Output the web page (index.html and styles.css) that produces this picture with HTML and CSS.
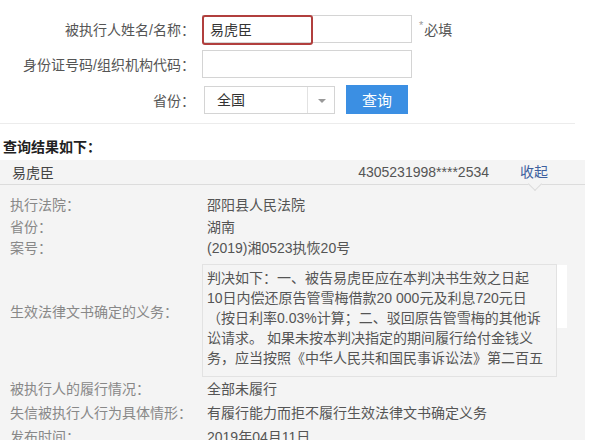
FILE: index.html
```html
<!DOCTYPE html>
<html lang="zh-CN">

<head>
    <meta charset="UTF-8" />
    <meta name="viewport" content="width=device-width, initial-scale=1.0" />
    <title>失信被执行人查询</title>
    <link rel="stylesheet" href="styles.css">
</head>

<body>
    <!-- Search form -->
    <form class="search">
        <div class="field">
            <label class="field-label">被执行人姓名/名称：</label>
            <div class="input-wrap">
                <input class="text-input" type="text" value="易虎臣">
                <span class="mark"></span>
            </div>
            <span class="required"><i>*</i>必填</span>
        </div>
        <div class="field">
            <label class="field-label">身份证号码/组织机构代码：</label>
            <div class="input-wrap">
                <input class="text-input" type="text" value="">
            </div>
        </div>
        <div class="field">
            <label class="field-label">省份：</label>
            <div class="field-group">
                <div class="select">
                    <span class="select-value">全国</span>
                    <span class="select-arrow"></span>
                </div>
                <button class="btn" type="button">查询</button>
            </div>
        </div>
    </form>

    <hr class="divider">

    <h3 class="result-title">查询结果如下：</h3>

    <!-- Result panel -->
    <section class="result">
        <div class="result-head">
            <span class="result-name">易虎臣</span>
            <span class="result-id">4305231998****2534</span>
            <a class="toggle">收起</a>
        </div>

        <div class="detail">
            <div class="row">
                <span class="row-label">执行法院：</span>
                <span class="row-value">邵阳县人民法院</span>
            </div>
            <div class="row">
                <span class="row-label">省份：</span>
                <span class="row-value">湖南</span>
            </div>
            <div class="row">
                <span class="row-label">案号：</span>
                <span class="row-value">(2019)湘0523执恢20号</span>
            </div>
            <div class="row row-duty">
                <span class="row-label">生效法律文书确定的义务：</span>
                <div class="duty">
                    <div class="duty-text">
                        判决如下：一、被告易虎臣应在本判决书生效之日起<br>
                        10日内偿还原告管雪梅借款20 000元及利息720元日<br>
                        （按日利率0.03%计算；二、驳回原告管雪梅的其他诉<br>
                        讼请求。 如果未按本判决指定的期间履行给付金钱义<br>
                        务，应当按照《中华人民共和国民事诉讼法》第二百五
                    </div>
                    <div class="duty-scroll"></div>
                </div>
            </div>
            <div class="row row-tall">
                <span class="row-label">被执行人的履行情况：</span>
                <span class="row-value">全部未履行</span>
            </div>
            <div class="row row-tall">
                <span class="row-label">失信被执行人行为具体情形：</span>
                <span class="row-value">有履行能力而拒不履行生效法律文书确定义务</span>
            </div>
            <div class="row row-tall">
                <span class="row-label">发布时间：</span>
                <span class="row-value">2019年04月11日</span>
            </div>
        </div>
    </section>
</body>

</html>
```

FILE: styles.css
```css
* {
    margin: 0;
    padding: 0;
    box-sizing: border-box;
}

body {
    font-family: "Liberation Sans", "Noto Sans CJK SC", sans-serif;
    font-size: 14px;
    color: #555;
    background-color: #fff;
    overflow: hidden;
}

/* Search form */
.search {
    display: flex;
    flex-direction: column;
    gap: 7px;
    padding-top: 15px;
}

.field {
    display: grid;
    grid-template-columns: 195px auto auto;
    column-gap: 7px;
    align-items: center;
    justify-content: start;
    height: 28px;
}

.field-label {
    text-align: right;
    color: #555;
}

.input-wrap {
    position: relative;
}

.text-input {
    display: block;
    width: 210px;
    height: 28px;
    border: 1px solid #d4d4d4;
    padding: 0 7px;
    font: inherit;
    color: #333;
    background: #fff;
    outline: none;
}

/* red highlight around the name */
.mark {
    position: absolute;
    left: 0;
    top: 0;
    width: 111px;
    height: 30px;
    border: 2px solid #b13f3d;
    border-radius: 3px;
}

.required {
    color: #555;
}

.required i {
    font-style: normal;
    font-size: 11px;
    color: #999;
    vertical-align: top;
    margin-right: 1px;
}

.field-group {
    display: flex;
    align-items: center;
    padding-left: 2px;
}

.select {
    display: flex;
    width: 131px;
    height: 28px;
    border: 1px solid #d4d4d4;
    background: #fff;
}

.select-value {
    flex: 1;
    line-height: 26px;
    padding-left: 12px;
    color: #333;
}

.select-arrow {
    position: relative;
    width: 27px;
    border-left: 1px solid #e2e2e2;
}

.select-arrow::after {
    content: "";
    position: absolute;
    left: 10px;
    top: 12px;
    border: 4px solid transparent;
    border-top-color: #999;
}

.btn {
    margin-left: 11px;
    width: 62px;
    height: 29px;
    border: none;
    background-color: #3b8fe3;
    color: #fff;
    font: inherit;
    font-size: 15px;
}

.divider {
    width: 575px;
    border: 0;
    border-top: 1px solid #ececec;
    margin-top: 10px;
}

.result-title {
    margin: 13px 0 3px 3px;
    font-size: 14px;
    line-height: 20px;
    font-weight: bold;
    color: #222;
}

/* Result panel */
.result {
    width: 585px;
    background-color: #f4f4f4;
}

.result-head {
    display: flex;
    align-items: center;
    height: 25px;
    padding: 0 37px 0 12px;
    border-bottom: 1px solid #dcdcdc;
    color: #444;
}

.result-name {
    flex: 1;
}

.result-id {
    margin-right: 31px;
    color: #555;
}

.toggle {
    position: relative;
    display: block;
    line-height: 20px;
    color: #3d5f9e;
}

/* little notch under "收起" */
.toggle::after {
    content: "";
    position: absolute;
    left: 10px;
    top: 17px;
    width: 9px;
    height: 9px;
    background-color: #f4f4f4;
    border-right: 1px solid #dcdcdc;
    border-bottom: 1px solid #dcdcdc;
    transform: rotate(45deg);
}

.detail {
    padding: 10px 0 4px 10px;
}

.row {
    display: grid;
    grid-template-columns: 197px 1fr;
    line-height: 21.5px;
}

.row-label {
    color: #888;
}

.row-value {
    color: #555;
}

.row-duty {
    align-items: center;
    margin-top: 4px;
}

.row-duty .row-label {
    padding-bottom: 15px;
}

.duty {
    display: flex;
    margin-left: -5px;
}

.duty-text {
    width: 355px;
    height: 113px;
    padding: 3px 0 0 4px;
    border: 1px solid #e2e2e2;
    line-height: 20.2px;
    white-space: nowrap;
    overflow: hidden;
    color: #555;
}

.duty-scroll {
    width: 10px;
    height: 63px;
    margin-top: 1px;
    background-color: #fff;
}

.row-tall {
    line-height: 24px;
}
```
